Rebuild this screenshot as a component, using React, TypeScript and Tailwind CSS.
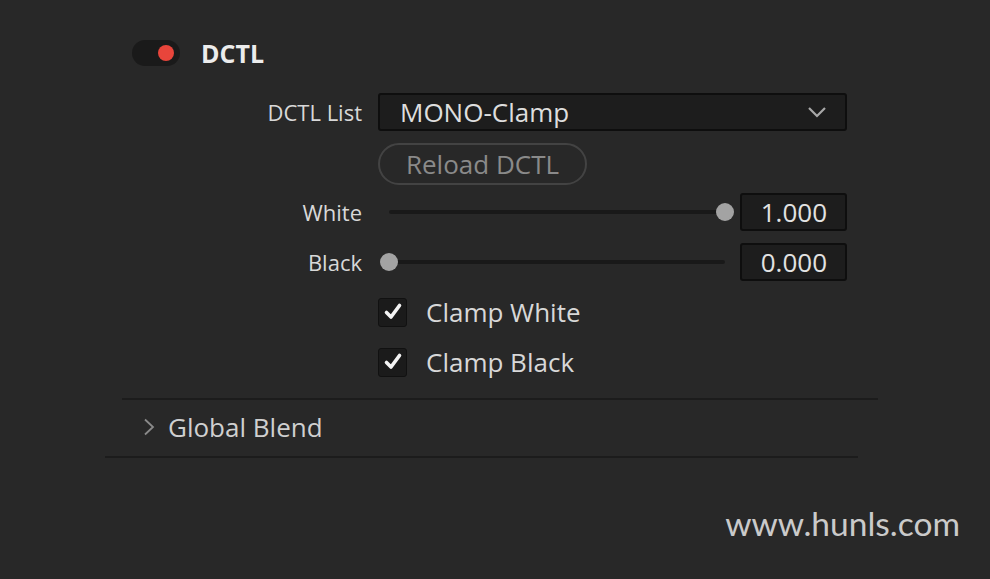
import React from "react";

const font = { fontFamily: '"Open Sans", "Liberation Sans", sans-serif' };

function Check() {
  return (
    <div className="w-[29px] h-[29px] rounded-[3px] bg-[#1b1b1b] border border-[#111] flex items-center justify-center">
      <svg width="20" height="20" viewBox="0 0 20 20">
        <path d="M3.5 10.5 L8 15 L16.5 3.5" fill="none" stroke="#f4f4f4" strokeWidth="3.6" strokeLinecap="round" strokeLinejoin="round" />
      </svg>
    </div>
  );
}

function Slider({ pos }: { pos: number }) {
  return (
    <div className="relative w-[354px] h-[20px] flex items-center">
      <div className="mx-[9px] flex-1 h-[4px] rounded-full bg-[#191919]" />
      <div
        className="absolute top-[1px] w-[18px] h-[18px] rounded-full bg-[#a3a3a3]"
        style={{ left: `${pos * 336}px` }}
      />
    </div>
  );
}

export default function App() {
  return (
    <div className="w-[990px] h-[579px] bg-[#282828] flex flex-col text-[#d8d8d8]" style={font}>
      <div className="mt-[40px] ml-[132px] flex items-center h-[26px]">
        <div className="w-[48px] h-[26px] rounded-full bg-[#1a1a1a] flex items-center justify-end pr-[6px]">
          <div className="w-[16px] h-[16px] rounded-full bg-[#e8453b]" />
        </div>
        <div className="ml-[21px] text-[25px] font-bold text-[#ececec] leading-none">DCTL</div>
      </div>

      <div className="mt-[27px] flex items-center h-[38px]">
        <div className="w-[362px] text-right text-[22px] leading-none">DCTL List</div>
        <div className="ml-[16px] w-[469px] h-[38px] rounded-[3px] bg-[#1d1d1d] border-2 border-[#0e0e0e] flex items-center pl-[20px] pr-[18px]">
          <span className="flex-1 text-[26px] leading-none text-[#dedede]">MONO-Clamp</span>
          <svg width="20" height="12" viewBox="0 0 20 12">
            <path d="M2 2 L10 10 L18 2" fill="none" stroke="#a8a8a8" strokeWidth="2.2" />
          </svg>
        </div>
      </div>

      <div className="mt-[12px] ml-[378px] w-[209px] h-[42px] rounded-full border-2 border-[#434343] flex items-center justify-center text-[26px] leading-none text-[#8a8a8a]">
        Reload DCTL
      </div>

      <div className="mt-[8px] flex items-center h-[38px]">
        <div className="w-[362px] text-right text-[22px] leading-none">White</div>
        <div className="ml-[18px]">
          <Slider pos={1} />
        </div>
        <div className="ml-[6px] w-[107px] h-[38px] rounded-[3px] bg-[#1d1d1d] border-2 border-[#0e0e0e] flex items-center justify-end pr-[18px] text-[26px] leading-none text-[#e2e2e2]">
          1.000
        </div>
      </div>

      <div className="mt-[12px] flex items-center h-[38px]">
        <div className="w-[362px] text-right text-[22px] leading-none">Black</div>
        <div className="ml-[18px]">
          <Slider pos={0} />
        </div>
        <div className="ml-[6px] w-[107px] h-[38px] rounded-[3px] bg-[#1d1d1d] border-2 border-[#0e0e0e] flex items-center justify-end pr-[18px] text-[26px] leading-none text-[#e2e2e2]">
          0.000
        </div>
      </div>

      <div className="mt-[16px] ml-[378px] flex items-center h-[30px]">
        <Check />
        <span className="ml-[19px] text-[26px] leading-none">Clamp White</span>
      </div>
      <div className="mt-[20px] ml-[378px] flex items-center h-[30px]">
        <Check />
        <span className="ml-[19px] text-[26px] leading-none">Clamp Black</span>
      </div>

      <div className="mt-[21px] ml-[122px] w-[756px] h-[2px] bg-[#1c1c1c]" />
      <div className="h-[56px] ml-[143px] flex items-center pb-[3px]">
        <svg width="12" height="18" viewBox="0 0 12 18">
          <path d="M2 1.5 L10 9 L2 16.5" fill="none" stroke="#8a8a8a" strokeWidth="1.8" />
        </svg>
        <span className="ml-[13px] text-[26px] leading-none text-[#d0d0d0]">Global Blend</span>
      </div>
      <div className="ml-[105px] w-[753px] h-[2px] bg-[#1c1c1c]" />

      <div className="mt-[49px] pr-[30px] flex justify-end">
        <span className="text-[33.5px] leading-none text-[#cacaca]" style={{ fontFamily: 'Lato, "Noto Sans", sans-serif' }}>
          www.hunls.com
        </span>
      </div>
    </div>
  );
}
